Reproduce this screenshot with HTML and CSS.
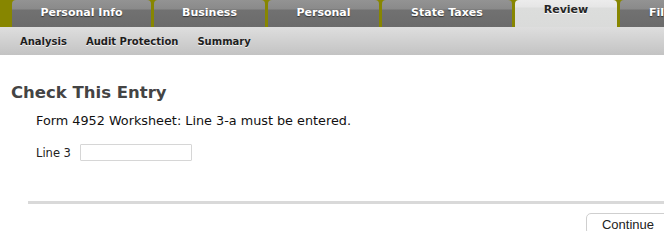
FILE: index.html
```html
<!DOCTYPE html>
<html>
<head>
<meta charset="utf-8">
<link rel="stylesheet" href="styles.css">
</head>
<body>
<div class="tabs">
  <div class="tab t1">Personal Info</div>
  <div class="tab t2">Business</div>
  <div class="tab t3">Personal</div>
  <div class="tab t4">State Taxes</div>
  <div class="tab t5 active">Review</div>
  <div class="tab t6">File</div>
</div>
<div class="subnav">
  <span class="sub">Analysis</span>
  <span class="sub">Audit Protection</span>
  <span class="sub">Summary</span>
</div>
<div class="content">
  <h1 class="title">Check This Entry</h1>
  <p class="message">Form 4952 Worksheet: Line 3-a must be entered.</p>
  <div class="field">
    <label class="label">Line 3</label>
    <input class="input" type="text">
  </div>
  <div class="rule"></div>
  <div class="footer">
    <button class="btn">Continue</button>
  </div>
</div>
</body>
</html>
```
FILE: styles.css
```css
* { box-sizing: border-box; }
html, body { margin: 0; padding: 0; background: #fff; overflow: hidden; }
body { width: 664px; height: 231px; font-family: "DejaVu Sans", sans-serif; }

.tabs {
  display: flex;
  gap: 3px;
  height: 27px;
  padding-left: 12px;
  background: #878600;
  overflow: hidden;
}
.tab {
  flex: none;
  height: 27px;
  border-radius: 4px 4px 0 0;
  background: linear-gradient(#939393 0, #8a8a8a 9px, #717171 10px, #6b6b6b 27px);
  color: #fff;
  font-size: 11px;
  font-weight: bold;
  text-align: center;
  padding-top: 6px;
  text-shadow: 0 1px 1px #333;
}
.t1 { width: 139px; }
.t2 { width: 111px; }
.t3 { width: 111px; }
.t4 { width: 130px; }
.t5 { width: 102px; }
.t6 { width: 80px; text-align: left; padding-left: 29px; }
.tab.active {
  background: linear-gradient(#ececec 0, #e6e6e6 7px, #dcdddc 8px, #dadbda 27px);
  color: #262626;
  padding-top: 3px;
  text-shadow: 0 1px 0 #fff;
}

.subnav {
  height: 28px;
  display: flex;
  align-items: center;
  padding-left: 20px;
  background: linear-gradient(#dedede, #c3c3c3);
}
.sub {
  font-size: 10px;
  font-weight: bold;
  color: #1e1e1e;
  text-shadow: 0 1px 0 #f4f4f4;
  margin-right: 19px;
}

.title {
  margin: 27px 0 0 11px;
  font-size: 16.5px;
  font-weight: bold;
  color: #444;
  line-height: 22px;
}
.message {
  margin: 9px 0 0 36px;
  font-size: 12.8px;
  color: #111;
  line-height: 16px;
}
.field {
  display: flex;
  align-items: center;
  margin: 15px 0 0 36px;
}
.label {
  font-size: 11.5px;
  color: #222;
  width: 44px;
}
.input {
  width: 112px;
  height: 17px;
  border: 1px solid #d6d6d6;
  border-radius: 1px;
  padding: 0;
  margin: 0;
  background: #fff;
}
.rule {
  margin: 40px 0 0 28px;
  height: 3px;
  background: #d9d9d9;
}
.footer {
  display: flex;
  justify-content: flex-end;
  margin-top: 9px;
  margin-right: -6px;
}
.btn {
  font-family: "Liberation Sans", Arial, sans-serif;
  font-size: 13px;
  color: #222;
  background: #fff;
  border: 1px solid #cfcfcf;
  border-radius: 5px;
  height: 22px;
  width: 84px;
  padding: 0;
  text-align: center;
}
```
